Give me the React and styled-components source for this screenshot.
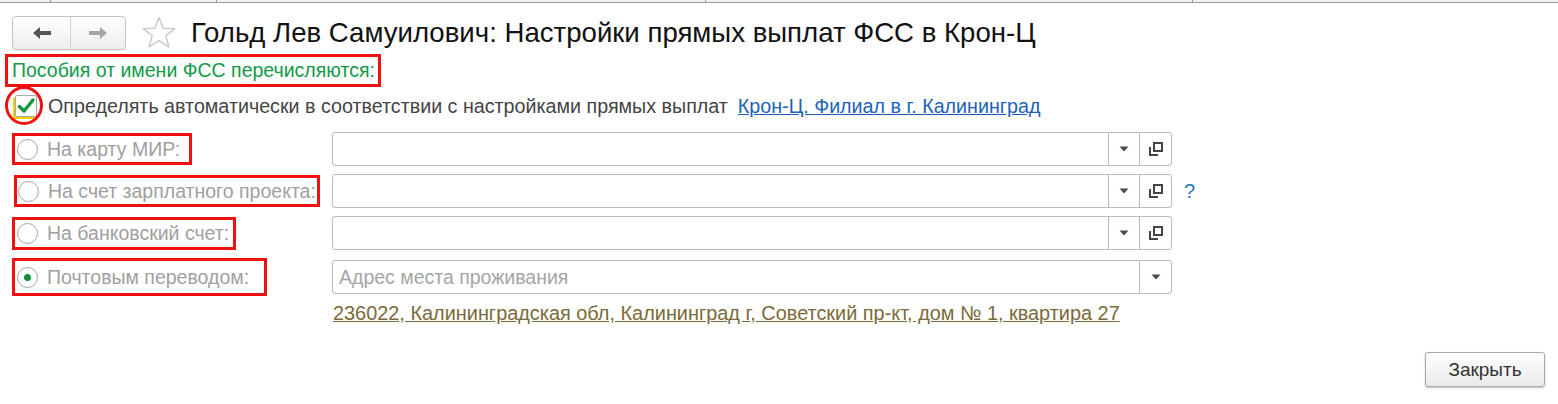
import React from "react";
import styled, { createGlobalStyle } from "styled-components";

const GlobalStyle = createGlobalStyle`
  body {
    margin: 0;
    background: #fff;
    font-family: "Liberation Sans", Arial, sans-serif;
  }
`;

const Page = styled.div`
  width: 1558px;
  height: 404px;
  overflow: hidden;
  position: relative;
`;

const TopStrip = styled.div`
  display: flex;
  height: 2px;
  background: #f0f0f0;
  border-bottom: 1px solid #9a9a9a;
`;

const StripTab = styled.div`
  width: ${(p) => p.$w}px;
  border-right: 1px solid #9a9a9a;
`;

const Header = styled.div`
  display: flex;
  align-items: center;
  padding: 12px 0 0 12px;
`;

const NavGroup = styled.div`
  display: flex;
  height: 32px;
  border: 1px solid #c4c4c4;
  border-radius: 4px;
  background: linear-gradient(#ffffff, #ededed);
  box-shadow: 0 1px 1px rgba(0, 0, 0, 0.08);
`;

const NavButton = styled.div`
  width: ${(p) => p.$w}px;
  display: flex;
  align-items: center;
  justify-content: center;
  & + & {
    border-left: 1px solid #d2d2d2;
  }
`;

const StarWrap = styled.div`
  margin-left: 15px;
  width: 36px;
  height: 36px;
  display: flex;
`;

const Title = styled.h1`
  margin: 0 0 0 14px;
  font-size: 27.6px;
  font-weight: normal;
  color: #111;
  line-height: 34px;
`;

const Body = styled.div`
  padding-top: 3px;
`;

const Highlight = styled.div`
  display: flex;
  width: fit-content;
  align-items: center;
  border: 3px solid #ee1111;
  box-sizing: border-box;
  height: ${(p) => p.$h || 33}px;
  padding: ${(p) => p.$pad || "0 3px 0 2px"};
  margin-left: ${(p) => p.$ml || 0}px;
`;

const SectionTitle = styled.span`
  color: #119a48;
  font-size: 19.5px;
`;

const CheckRow = styled.div`
  display: flex;
  align-items: center;
  margin: 7px 0 0 15px;
  height: 24px;
  font-size: 19.7px;
  color: #444;
  position: relative;
`;

const CheckBox = styled.div`
  width: 20px;
  height: 20px;
  border: 1px solid #a9a9a9;
  border-radius: 2px;
  background: #fff;
  box-shadow: -2px 2px 0 #f4d000;
  display: flex;
  align-items: center;
  justify-content: center;
  margin-right: 11px;
`;

const Ring = styled.div`
  position: absolute;
  left: -10px;
  top: -8px;
  width: 32px;
  height: 33px;
  border: 3px solid #ee1111;
  border-radius: 50%;
  pointer-events: none;
`;

const Link = styled.a`
  color: ${(p) => p.$color || "#1d62b8"};
  text-decoration: underline;
  margin-left: ${(p) => p.$ml || 0}px;
  cursor: pointer;
`;

const Form = styled.div`
  display: grid;
  grid-template-columns: 320px 840px auto;
  row-gap: 8px;
  padding-left: 12px;
  margin-top: 14px;
  align-items: center;
`;

const Radio = styled.span`
  width: 19px;
  height: 19px;
  border: 1px solid #a3a3a3;
  border-radius: 50%;
  background: #fff;
  display: inline-flex;
  align-items: center;
  justify-content: center;
  margin-right: 9px;
  flex: none;
  &::after {
    content: "";
    width: 7px;
    height: 7px;
    border-radius: 50%;
    background: ${(p) => (p.$checked ? "#0f8f3c" : "transparent")};
  }
`;

const LabelText = styled.span`
  font-size: 19.5px;
  color: #a0a0a0;
  white-space: nowrap;
`;

const LabelCell = styled.div`
  justify-self: start;
  grid-column: 1;
`;

const Field = styled.div`
  grid-column: 2;
  display: flex;
  height: 34px;
  box-sizing: border-box;
  border: 1px solid #bcbcbc;
  border-radius: 3px;
  background: #fff;
`;

const FieldInput = styled.div`
  flex: 1;
  display: flex;
  align-items: center;
  padding-left: 6px;
  font-size: 19.5px;
  color: #a5a5a5;
`;

const FieldButton = styled.div`
  width: ${(p) => p.$w}px;
  border-left: 1px solid #bcbcbc;
  display: flex;
  align-items: center;
  justify-content: center;
`;

const Help = styled.span`
  grid-column: 3;
  margin-left: 12px;
  color: #1f78c8;
  font-size: 20px;
`;

const Address = styled.div`
  grid-column: 2;
  margin-top: -2px;
  padding-left: 1px;
  font-size: 19.9px;
`;

const Footer = styled.div`
  display: flex;
  justify-content: flex-end;
  padding-right: 13px;
  margin-top: 27px;
`;

const CloseButton = styled.button`
  width: 120px;
  height: 35px;
  border: 1px solid #a9a9a9;
  border-radius: 3px;
  background: linear-gradient(#ffffff, #e9e9e9);
  box-shadow: 0 1px 2px rgba(0, 0, 0, 0.25);
  font-family: "Liberation Sans", Arial, sans-serif;
  font-size: 19px;
  color: #333;
`;

const Arrow = ({ dir, color }) => (
  <svg width="22" height="16" viewBox="0 0 22 16">
    <g transform={dir === "right" ? "matrix(-1 0 0 1 22 0)" : undefined}>
      <path d="M2 8 L9 2 V6 H20 V10 H9 V14 Z" fill={color} />
    </g>
  </svg>
);

const Star = () => (
  <svg width="36" height="36" viewBox="0 0 36 36">
    <path
      d="M18 2.5 L22.3 13.2 L33.8 13.6 L24.8 20.8 L28 32 L18 25.6 L8 32 L11.2 20.8 L2.2 13.6 L13.7 13.2 Z"
      fill="none"
      stroke="#c9c9c9"
      strokeWidth="1.4"
      strokeLinejoin="round"
    />
  </svg>
);

const Check = () => (
  <svg width="20" height="20" viewBox="0 0 20 20">
    <path
      d="M3.5 10.5 L8 15 L17 4"
      fill="none"
      stroke="#17963d"
      strokeWidth="3.4"
      strokeLinecap="round"
      strokeLinejoin="round"
    />
  </svg>
);

const Caret = () => (
  <svg width="10" height="6" viewBox="0 0 10 6">
    <path d="M0.5 0.5 H9.5 L5 5.5 Z" fill="#4a4a4a" />
  </svg>
);

const OpenIcon = () => (
  <svg width="16" height="16" viewBox="0 0 16 16">
    <rect x="6" y="2" width="8" height="8" fill="none" stroke="#444" strokeWidth="2" />
    <path d="M2 6 V14 H10" fill="none" stroke="#444" strokeWidth="2" />
  </svg>
);

const rows = [
  { label: "На карту МИР:", h: 32, pad: "0 9px 0 2px", open: true },
  { label: "На счет зарплатного проекта:", h: 32, pad: "0 1px 0 1px", ml: 2, open: true, help: true },
  { label: "На банковский счет:", h: 33, pad: "0 4px 0 2px", open: true },
  {
    label: "Почтовым переводом:",
    h: 38,
    pad: "0 15px 0 2px",
    checked: true,
    placeholder: "Адрес места проживания",
  },
];

const App = () => {
  return (
    <Page>
      <GlobalStyle />
      <TopStrip>
        <StripTab $w={50} />
        <StripTab $w={165} />
        <StripTab $w={488} />
        <StripTab $w={486} />
      </TopStrip>
      <Header>
        <NavGroup>
          <NavButton $w={57}>
            <Arrow dir="left" color="#555" />
          </NavButton>
          <NavButton $w={54}>
            <Arrow dir="right" color="#a5a5a5" />
          </NavButton>
        </NavGroup>
        <StarWrap>
          <Star />
        </StarWrap>
        <Title>Гольд Лев Самуилович: Настройки прямых выплат ФСС в Крон-Ц</Title>
      </Header>
      <Body>
        <Highlight $ml={5} $pad="0 3px 0 4px">
          <SectionTitle>Пособия от имени ФСС перечисляются:</SectionTitle>
        </Highlight>
        <CheckRow>
          <CheckBox>
            <Check />
          </CheckBox>
          <Ring />
          Определять автоматически в соответствии с настройками прямых выплат
          <Link $ml={10}>Крон-Ц. Филиал в г. Калининград</Link>
        </CheckRow>
        <Form>
          {rows.map((r) => (
            <React.Fragment key={r.label}>
              <LabelCell>
                <Highlight $h={r.h} $pad={r.pad} $ml={r.ml}>
                  <Radio $checked={r.checked} />
                  <LabelText>{r.label}</LabelText>
                </Highlight>
              </LabelCell>
              <Field>
                <FieldInput>{r.placeholder}</FieldInput>
                <FieldButton $w={r.open ? 30 : 31}>
                  <Caret />
                </FieldButton>
                {r.open && (
                  <FieldButton $w={31}>
                    <OpenIcon />
                  </FieldButton>
                )}
              </Field>
              {r.help && <Help>?</Help>}
            </React.Fragment>
          ))}
          <Address>
            <Link $color="#7b6a3a">
              236022, Калининградская обл, Калининград г, Советский пр-кт, дом № 1, квартира 27
            </Link>
          </Address>
        </Form>
        <Footer>
          <CloseButton>Закрыть</CloseButton>
        </Footer>
      </Body>
    </Page>
  );
};

export default App;
